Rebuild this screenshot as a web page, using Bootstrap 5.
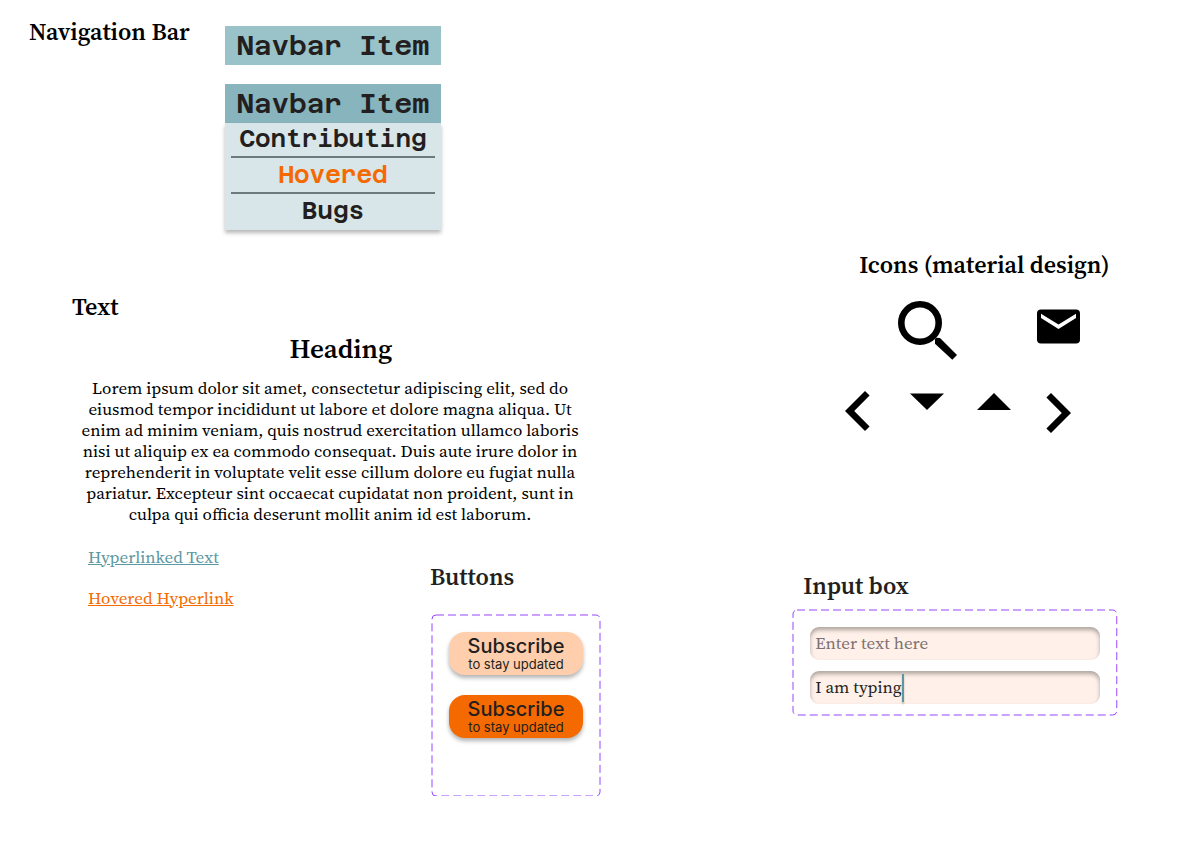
<!DOCTYPE html>
<html lang="en">
<head>
<meta charset="utf-8">
<meta name="viewport" content="width=device-width, initial-scale=1">
<title>Component sheet</title>
<link rel="stylesheet" href="https://cdn.jsdelivr.net/npm/bootstrap@5.3.0/dist/css/bootstrap.min.css">
<style>
:root { --ink: #231f20; --orange: #f56a00; --serif: "Source Serif 4", "Liberation Serif", serif; --mono: "Azeret Mono", "Liberation Mono", monospace; }
body { font-family: var(--serif); font-size: 17px; line-height: 21px; color: #000; background: #fff; }
.sheet-title { font-size: 24px; line-height: 32px; font-weight: 600; margin: 0; }
.ink { color: var(--ink); }
.nav-area { padding: 16px 0 0 29px; }
.nav-title { width: 196px; }
.nav-demos { width: 216px; padding-top: 10px; gap: 19px; }
.nav-tile { font: 600 27px/39px var(--mono); color: var(--ink); background: #9ac2c9; border: 0; padding: 0; width: 100%; display: block; text-align: center; white-space: nowrap; }
.nav-tile.is-open { background: #88b4bd; }
.nav-drop { background: #d9e6e9; box-shadow: 0 3px 4px rgba(0,0,0,.28); padding: 0 6px 2px; }
.nav-drop a { display: block; font: 600 24px/32px var(--mono); color: var(--ink); text-align: center; text-decoration: none; padding-bottom: 1px; }
.nav-drop li + li { border-top: 2px solid #6c7a7b; padding-top: 1px; }
.nav-drop .is-hover { color: var(--orange); }
.text-area { padding: 61px 0 0 72px; }
.text-block { width: 516px; }
.text-block p { white-space: nowrap; }
.text-block h3 { font-size: 27px; line-height: 34px; font-weight: 600; margin: 9px 0 12px; padding-left: 22px; }
.link-col { width: 344px; padding: 22px 0 0 16px; gap: 20px; }
.link-col a { color: #5b98a2; }
.link-col a.is-hover { color: var(--orange); }
.button-col { padding-top: 36px; }
.button-title { padding-left: 14px; }
.dash-frame { position: relative; }
.dash-frame > svg { position: absolute; inset: 0; width: 100%; height: 100%; pointer-events: none; overflow: visible; }
.button-frame { width: 168px; min-height: 181px; margin: 22px 0 0 16px; padding: 17px; gap: 20px; }
.subscribe { border: 0; border-radius: 16px; background: #ffcfad; color: var(--ink); font: 400 14px/16px Inter, sans-serif; padding: 3px 0 4px; height: 43px; width: 134px; box-shadow: 0 3px 4px rgba(0,0,0,.3); white-space: nowrap; }
.subscribe strong { display: block; font-size: 20px; line-height: 22px; font-weight: 500; }
.subscribe span { display: block; font-size: 13px; line-height: 14px; font-optical-sizing: none; }
.subscribe.is-hover { background: var(--orange); }
.right-side { padding: 249px 80px 0 95px; }
.icon-title { padding-left: 66px; white-space: nowrap; }
.icon-grid { display: grid; grid-template-columns: 64px 76px 58px 70px; justify-items: center; margin: 20px 0 0 32px; row-gap: 30px; min-height: 132px; align-items: start; }
.icon-grid svg { display: block; }
.push-8 { margin-top: 8px; }
.push-2 { margin-top: 2px; }
.input-title { padding-left: 10px; margin-top: 137px; }
.input-frame { padding: 17px 17px 11px; margin-top: 8px; row-gap: 11px; }
.soft-input { display: block; width: 100%; height: 33px; border: 0; border-radius: 9px; padding: 0 5px 2px; background: #fff1e9; box-shadow: inset 0 3px 4px rgba(0,0,0,.32); color: var(--ink); outline: 0; }
.soft-input::placeholder { color: #7d7070; opacity: 1; }
.caret { position: absolute; left: 92px; top: 3px; width: 2px; height: 28px; background: #5b98a2; box-shadow: 0 2px 2px rgba(0,0,0,.25); }
</style>
</head>
<body>
<main class="container-fluid p-0">
  <div class="row g-0">
    <div class="col-7">
      <section class="nav-area d-flex">
        <h2 class="sheet-title nav-title">Navigation Bar</h2>
        <div class="nav-demos d-flex flex-column">
          <button type="button" class="nav-tile">Navbar Item</button>
          <nav>
            <button type="button" class="nav-tile is-open">Navbar Item</button>
            <ul class="nav-drop list-unstyled m-0">
              <li><a href="#">Contributing</a></li>
              <li><a href="#" class="is-hover">Hovered</a></li>
              <li><a href="#">Bugs</a></li>
            </ul>
          </nav>
        </div>
      </section>
      <section class="text-area">
        <h2 class="sheet-title">Text</h2>
        <div class="text-block text-center">
          <h3>Heading</h3>
          <p class="m-0">Lorem ipsum dolor sit amet, consectetur adipiscing elit, sed do<br>eiusmod tempor incididunt ut labore et dolore magna aliqua. Ut<br>enim ad minim veniam, quis nostrud exercitation ullamco laboris<br>nisi ut aliquip ex ea commodo consequat. Duis aute irure dolor in<br>reprehenderit in voluptate velit esse cillum dolore eu fugiat nulla<br>pariatur. Excepteur sint occaecat cupidatat non proident, sunt in<br>culpa qui officia deserunt mollit anim id est laborum.</p>
        </div>
        <div class="d-flex">
          <div class="link-col d-flex flex-column align-items-start">
            <a href="#">Hyperlinked Text</a>
            <a href="#" class="is-hover">Hovered Hyperlink</a>
          </div>
          <div class="button-col">
            <h2 class="sheet-title ink button-title">Buttons</h2>
            <div class="dash-frame button-frame d-flex flex-column">
              <svg aria-hidden="true"><rect width="100%" height="100%" rx="4" fill="none" stroke="#9747ff" stroke-dasharray="8 4"/></svg>
              <button type="button" class="subscribe"><strong>Subscribe</strong><span>to stay updated</span></button>
              <button type="button" class="subscribe is-hover"><strong>Subscribe</strong><span>to stay updated</span></button>
            </div>
          </div>
        </div>
      </section>
    </div>
    <div class="col-5 right-side">
      <h2 class="sheet-title icon-title">Icons (material design)</h2>
      <div class="icon-grid">
        <span></span>
        <svg width="59" height="59" viewBox="0 0 59 59"><circle cx="22" cy="22" r="18.7" fill="none" stroke="#000" stroke-width="6.6"/><path d="M37 42.7V38l1.5-1.3 3.5.3 17 17-4.7 4.7z"/></svg>
        <span></span>
        <svg class="push-8" width="43" height="35" viewBox="0 0 43 35"><rect y=".5" width="43" height="34" rx="4"/><path fill="#fff" d="M4 4.7 21.5 15.6 39 4.7V9L21.5 20 4 9z"/></svg>
        <svg width="25" height="40" viewBox="0 0 25 40"><path d="M20 0l4.6 4.6L9.2 20l15.4 15.4L20 40 0 20z"/></svg>
        <svg class="push-2" width="34" height="17" viewBox="0 0 34 17"><path d="M0 .5h34L17 17z"/></svg>
        <svg class="push-2" width="34" height="17" viewBox="0 0 34 17"><path d="M0 17h34L17 0z"/></svg>
        <svg class="push-2" width="25" height="40" viewBox="0 0 25 40"><path d="M5 0L.4 4.6 15.8 20 .4 35.4 5 40l20-20z"/></svg>
      </div>
      <h2 class="sheet-title ink input-title">Input box</h2>
      <div class="dash-frame input-frame d-grid">
        <svg aria-hidden="true"><rect width="100%" height="100%" rx="4" fill="none" stroke="#9747ff" stroke-dasharray="8 4"/></svg>
        <input type="text" class="soft-input" placeholder="Enter text here" aria-label="Empty text box">
        <div class="position-relative">
          <input type="text" class="soft-input" value="I am typing" aria-label="Text box being typed in">
          <span class="caret"></span>
        </div>
      </div>
    </div>
  </div>
</main>
<script src="https://cdn.jsdelivr.net/npm/bootstrap@5.3.0/dist/js/bootstrap.bundle.min.js"></script>
</body>
</html>
